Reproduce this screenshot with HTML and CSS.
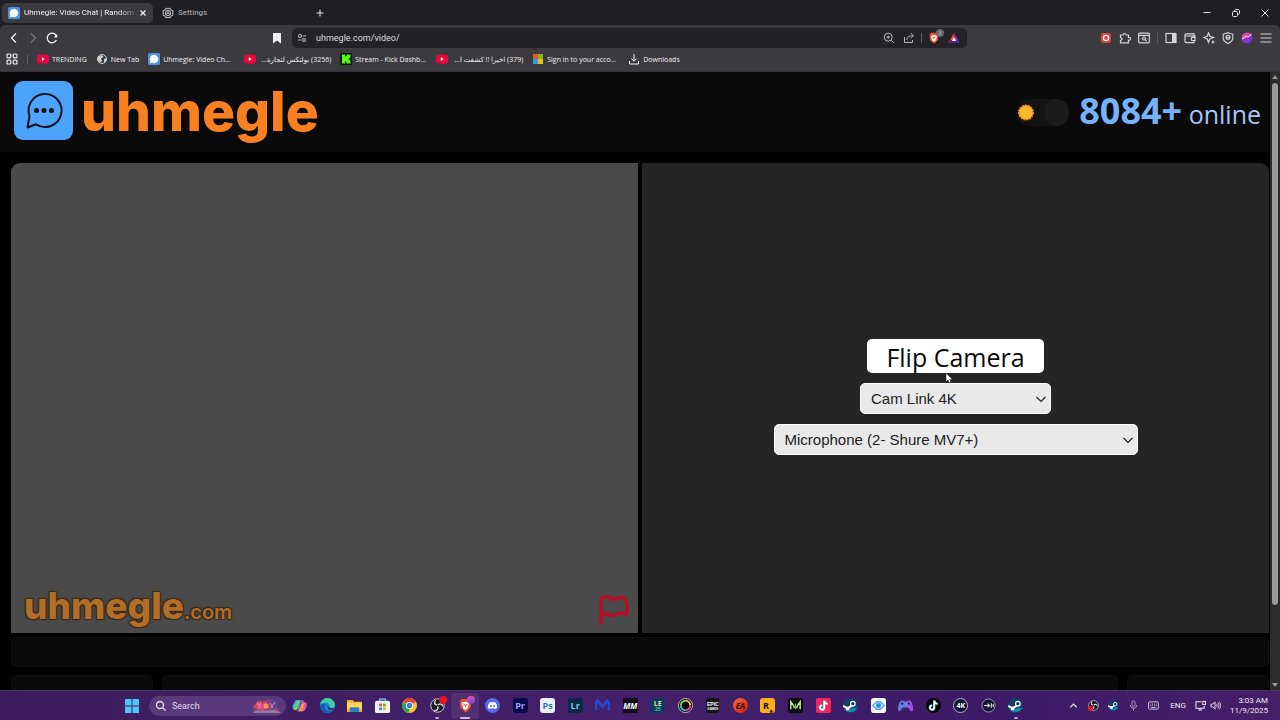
FILE: index.html
```html
<!DOCTYPE html>
<html lang="en">
<head>
    <meta charset="UTF-8">
    <meta name="viewport" content="width=device-width, initial-scale=1.0">
    <title>Uhmegle: Video Chat</title>
    <link rel="stylesheet" href="styles.css">
</head>
<body>
    <!-- shared icons -->
    <svg class="sprite" aria-hidden="true">
        <symbol id="bubble" viewBox="0 0 16 16"><rect width="16" height="16" rx="2" fill="#4a90e8"/><path d="M8 2.500a5.500 5.500 0 1 1-2.400 10.400L2.500 13.500l.5-3A5.500 5.500 0 0 1 8 2.500z" fill="#fff"/></symbol>
        <symbol id="youtube" viewBox="0 0 16 16"><rect y="2" width="16" height="12" rx="3.500" fill="#e8063c"/><path d="M6.500 5.500v5l4-2.500z" fill="#fff"/></symbol>
        <symbol id="steam" viewBox="0 0 16 16"><circle cx="8" cy="8" r="8" fill="#123f68"/><path d="M1 11a8 8 0 0 0 14 0l-4-1-5 3z" fill="#1b86b8"/><path d="M0 8.500l5 2.300 4-2.300 1.500-4" fill="none" stroke="#fff" stroke-width="2.200"/><circle cx="10.500" cy="6" r="2.500" fill="#123f68" stroke="#fff" stroke-width="1.300"/><circle cx="5" cy="11.200" r="2" fill="#fff"/></symbol>
        <symbol id="obs" viewBox="0 0 16 16"><circle cx="8" cy="8" r="7.200" fill="#1c1a1e" stroke="#d8d4dc"/><path d="M7.500 7.500c-3-.5-3.500-3-1.500-5M8.500 7.500c2-2 5-1 5 1.500M8 9c1.500 2.500-.5 5-3.500 4" fill="none" stroke="#d8d4dc" stroke-width="1.600"/></symbol>
        <symbol id="note" viewBox="0 0 16 16"><path d="M9 3v7.200A2.300 2.300 0 1 1 6.700 8M9 3c.3 2 1.500 3.200 3.500 3.300" fill="none" stroke="#25f4ee" stroke-width="1.800" transform="translate(-.6 -.4)"/><path d="M9 3v7.200A2.300 2.300 0 1 1 6.700 8M9 3c.3 2 1.500 3.200 3.500 3.300" fill="none" stroke="#fff" stroke-width="1.800"/></symbol>
        <symbol id="lion" viewBox="0 0 16 16"><path d="M4 1h8l2 2.500-.6 7L8 15.500 2.600 10.500 2 3.500z" fill="#f1502b"/><path d="M4.500 4.500L8 4l3.500.5.8 2-1.500 2 .2 2L8 13l-3-2.500.2-2-1.500-2z" fill="#fff"/><path d="M5.500 6.500l2 .7.5 2.500.5-2.500 2-.7" fill="none" stroke="#f1502b"/></symbol>
        <symbol id="chevron" viewBox="0 0 12 12"><path d="M1.500 4L6 8.500 10.500 4" fill="none" stroke="currentColor" stroke-width="1.200"/></symbol>
    </svg>

    <header class="browser">
        <div class="tab-strip">
            <div class="tab active">
                <svg class="icon"><use href="#bubble"/></svg>
                <span class="tab-title">Uhmegle: Video Chat | Random</span>
                <button class="tab-close" aria-label="Close tab"><svg viewBox="0 0 8 8"><path d="M1.500 1.500l5 5M6.500 1.500l-5 5" stroke="currentColor" stroke-width="1.200"/></svg></button>
            </div>
            <div class="tab">
                <svg class="icon" viewBox="0 0 16 16" fill="none" stroke="currentColor" stroke-width="1.400"><path d="M5.500 1.500L8 2.500l2.500-1L12 4l2.500 1-.3 3 .3 3-2.500 1-1.500 2.500-2.500-1-2.500 1L4 12l-2.500-1 .3-3-.3-3L4 4z"/><circle cx="8" cy="8" r="3.300"/><path d="M8 8V4.700M8 8l3 1.500M8 8l-3 1.500"/></svg>
                <span class="tab-title">Settings</span>
            </div>
            <button class="new-tab" aria-label="New tab"><svg viewBox="0 0 12 12"><path d="M6 2.500v7M2.500 6h7" stroke="currentColor"/></svg></button>
            <div class="window-buttons">
                <button aria-label="Minimize"><svg viewBox="0 0 12 12"><path d="M2.500 5.500h7" stroke="currentColor"/></svg></button>
                <button aria-label="Restore"><svg viewBox="0 0 12 12" fill="none" stroke="currentColor"><rect x="2.500" y="4.500" width="5" height="5" rx="1"/><path d="M4.500 4.500V4c0-.8.4-1.500 1.200-1.500H8c.8 0 1.500.5 1.500 1.300v2.500c0 .8-.7 1.200-1.500 1.200h-.5"/></svg></button>
                <button aria-label="Close"><svg viewBox="0 0 12 12"><path d="M2.500 2.500l7 7M9.500 2.500l-7 7" stroke="currentColor"/></svg></button>
            </div>
        </div>

        <div class="toolbar">
            <nav class="nav-buttons">
                <button aria-label="Back"><svg viewBox="0 0 12 12" fill="none" stroke="currentColor" stroke-width="1.300"><path d="M8 1.500L3.500 6 8 10.500"/></svg></button>
                <button class="dim" aria-label="Forward"><svg viewBox="0 0 12 12" fill="none" stroke="currentColor" stroke-width="1.300"><path d="M4 1.500L8.500 6 4 10.500"/></svg></button>
                <button aria-label="Reload"><svg viewBox="0 0 12 12" fill="none" stroke="currentColor" stroke-width="1.300"><path d="M10.400 8A4.800 4.800 0 1 1 10.600 4.500"/><path d="M11.200 2v3.600H7.600z" fill="currentColor" stroke="none"/></svg></button>
                <button class="bookmark-page" aria-label="Bookmark"><svg viewBox="0 0 12 12" fill="currentColor"><path d="M2 1h8v10.500L6 8.500l-4 3z"/></svg></button>
            </nav>
            <div class="address">
                <svg viewBox="0 0 12 12" fill="none" stroke="currentColor" stroke-width="1.100"><circle cx="4" cy="4" r="1.500"/><path d="M6.500 4H10M2 8h3.500"/><circle cx="8" cy="8" r="1.500"/></svg>
                <input type="text" aria-label="Address" value="uhmegle.com/video/">
                <button aria-label="Zoom"><svg viewBox="0 0 12 12" fill="none" stroke="currentColor"><circle cx="5.200" cy="5.200" r="4"/><path d="M8.200 8.200L11 11M5.200 3.500v3.400M3.500 5.200h3.400"/></svg></button>
                <button aria-label="Share"><svg viewBox="0 0 12 12" fill="none" stroke="currentColor"><path d="M1.500 5v5.500h8V8M3.800 8c.2-3 2-4.200 6-4.200M7.800 1.200l2.700 2.600-2.700 2.600"/></svg></button>
                <span class="divider"></span>
                <button class="shield" aria-label="Shields"><svg><use href="#lion"/></svg><span class="count">3</span></button>
                <button aria-label="Rewards"><svg viewBox="0 0 12 12"><path d="M6 1L0 11h6z" fill="#f0402c"/><path d="M6 1l6 10H6z" fill="#8a2a9c"/><path d="M0 11h12l-2.500-3h-7z" fill="#4a2290"/><path d="M6 5L3.800 9h4.400z" fill="#fff"/></svg></button>
            </div>
            <div class="extensions">
                <button aria-label="Recorder"><svg viewBox="0 0 12 12"><rect x="1" y="1" width="10" height="10" rx="2" fill="#dc3f3b"/><circle cx="6" cy="6" r="2.600" fill="none" stroke="#fff" stroke-width="1.400"/></svg></button>
                <button aria-label="Extensions"><svg viewBox="0 0 12 12" fill="none" stroke="currentColor" stroke-width="1.200"><path d="M1.500 3h2.700a1.500 1.500 0 1 1 3 0H9.500v2.400a1.500 1.500 0 1 1 0 2.800v2.600h-8V8.300c2 .2 2-3 0-2.700z"/></svg></button>
                <button aria-label="Search tabs"><svg viewBox="0 0 12 12" fill="none" stroke="currentColor" stroke-width="1.200"><rect x=".7" y="1.200" width="10.600" height="9.600" rx="1"/><path d="M1 3.400h10"/><circle cx="6" cy="6.500" r="1.500"/><path d="M7 7.500l1.600 1.600"/></svg></button>
                <span class="divider"></span>
                <button aria-label="Sidebar"><svg viewBox="0 0 12 12"><rect x="1" y="1.500" width="10" height="9" fill="none" stroke="currentColor" stroke-width="1.200"/><path d="M7 1.500h4v9H7z" fill="currentColor"/></svg></button>
                <button aria-label="Wallet"><svg viewBox="0 0 12 12" fill="none" stroke="currentColor" stroke-width="1.200"><path d="M10 4V1.800H2A1.200 1.200 0 0 0 1 3v6.500c0 .6.500 1.200 1.200 1.200H10V8.500M1.500 4H11v4.500H8a2 2 0 0 1 0-3.200h3"/></svg></button>
                <button aria-label="Leo AI"><svg viewBox="0 0 12 12" fill="none" stroke="currentColor" stroke-width="1.200"><path d="M5.500 1l1.400 3.300L10.500 5.500 6.900 7 5.500 10.300 4.200 7 .8 5.500l3.400-1.200z"/><path d="M10 8.500v3M8.500 10h3"/></svg></button>
                <button aria-label="VPN"><svg viewBox="0 0 12 12" fill="none" stroke="currentColor" stroke-width="1.100"><path d="M6 .7l4.800 1.600v3.500c0 2.600-2 4.500-4.800 5.600C3.200 10.300 1.200 8.400 1.200 5.800V2.300z"/><circle cx="6" cy="5.300" r="2"/><path d="M4 5.300h4"/></svg></button>
                <button aria-label="Profile"><svg viewBox="0 0 12 12"><circle cx="6" cy="6" r="5.500" fill="#7c35cc"/><path d="M.8 4.500A5.500 5.500 0 0 1 11 3.800L6 6 1 8z" fill="#d849a8"/><path d="M1 7l4-3 2 1 3.500-3" fill="none" stroke="#f8d8fa"/></svg></button>
                <button aria-label="Menu"><svg viewBox="0 0 12 12"><path d="M.5 2h11M.5 6h11M.5 10h11" stroke="currentColor" stroke-width="1.200"/></svg></button>
            </div>
        </div>

        <nav class="bookmarks">
            <button class="apps-grid" aria-label="Apps"><svg viewBox="0 0 12 12" fill="none" stroke="currentColor" stroke-width="1.200"><rect x="1" y="1" width="3.800" height="3.800" rx="1"/><rect x="7.200" y="1" width="3.800" height="3.800" rx="1"/><rect x="1" y="7.200" width="3.800" height="3.800" rx="1"/><rect x="7.200" y="7.200" width="3.800" height="3.800" rx="1"/></svg></button>
            <span class="divider"></span>
            <a href="#"><svg><use href="#youtube"/></svg><span>TRENDING</span></a>
            <a href="#"><svg viewBox="0 0 12 12"><circle cx="6" cy="6" r="4.500" fill="none" stroke="#d0d0d2"/><path d="M2 3.500l4-1.500 1.500 2L5 5.500 6 8l-2 1.500L1.500 7zM8 6l2.500-.8-.5 3.500-2 1z" fill="#d0d0d2"/></svg><span>New Tab</span></a>
            <a href="#"><svg><use href="#bubble"/></svg><span class="long">Uhmegle: Video Ch...</span></a>
            <a href="#"><svg><use href="#youtube"/></svg><span class="long" dir="rtl">(3256) بولتكس لتجارة...</span></a>
            <a href="#"><svg viewBox="0 0 12 12"><rect width="12" height="12" rx="1" fill="#071a05"/><path d="M2 1.500h3v2h1v-1h1v-1h3.500v3h-1v1h-1v1h1v1h1v3H7v-1H6v-1H5v2H2z" fill="#53fc18"/></svg><span class="long">Stream - Kick Dashb...</span></a>
            <a href="#"><svg><use href="#youtube"/></svg><span class="long" dir="rtl">(379) اخيرا !! كشفت ا...</span></a>
            <a href="#"><svg viewBox="0 0 12 12"><path d="M1 1h5v5H1z" fill="#e8562c"/><path d="M6 1h5v5H6z" fill="#86b71c"/><path d="M1 6h5v5H1z" fill="#20a2e4"/><path d="M6 6h5v5H6z" fill="#f6b91a"/></svg><span class="long">Sign in to your acco...</span></a>
            <a href="#"><svg viewBox="0 0 12 12" fill="none" stroke="currentColor"><path d="M6 1v7M3.300 5.500L6 8.200l2.700-2.700M1.500 8v3h9V8"/></svg><span>Downloads</span></a>
        </nav>
    </header>

    <div class="viewport">
        <div class="page">
            <header class="site-header">
                <a class="brand" href="#">
                    <svg class="brand-icon" viewBox="0 0 59 59"><path d="M13.500 46.500l2-11.500a16.500 16.500 0 1 1 6.500 8.300z" fill="none" stroke="#0a1018" stroke-width="2" stroke-linejoin="round"/><circle cx="22.500" cy="29.500" r="2.500" fill="#0a1018"/><circle cx="30" cy="29.500" r="2.500" fill="#0a1018"/><circle cx="37.500" cy="29.500" r="2.500" fill="#0a1018"/></svg>
                    <span class="brand-name">uhmegle</span>
                </a>
                <div class="status">
                    <label class="theme-toggle">
                        <input type="checkbox" checked aria-label="Dark theme">
                        <svg viewBox="0 0 18 18"><circle cx="9" cy="9" r="7.300" fill="#f39a1e" stroke="#f08a16" stroke-width="1.500" stroke-dasharray="2 1"/><circle cx="9" cy="9" r="6.300" fill="#fbb92e"/></svg>
                    </label>
                    <span class="online"><strong>8084+</strong> online</span>
                </div>
            </header>

            <main class="chat">
                <div class="videos">
                    <section class="video stranger">
                        <div class="watermark">uhmegle<span>.com</span></div>
                        <button class="report" aria-label="Report"><svg viewBox="0 0 32 30" fill="none" stroke="#b80f26" stroke-width="3.500" stroke-linecap="round" stroke-linejoin="round"><path d="M3 28V6c0-2.500 1-3.500 3-4 4-1 6 0 8 2 1.500 1 2.500 1 4 0 3-2.200 6-2.200 8.500-.5 2.500 3 3.500 9 2 15.500-4-1-7-1-10 .5-3 1.500-6 1-9 0-2.500-1-4.500-.5-6.500 .5"/></svg></button>
                    </section>
                    <section class="video self">
                        <div class="camera-controls">
                            <button class="flip">Flip Camera</button>
                            <div class="picker">
                                <select class="camera" aria-label="Camera"><option>Cam Link 4K</option></select>
                                <svg><use href="#chevron"/></svg>
                            </div>
                            <div class="picker">
                                <select class="microphone" aria-label="Microphone"><option>Microphone (2- Shure MV7+)</option></select>
                                <svg><use href="#chevron"/></svg>
                            </div>
                            <svg class="pointer" viewBox="0 0 8 12"><path d="M1 1v9l2-2 1.500 3 1.500-.7L4.700 7.500H7.500z" fill="#fff" stroke="#222" stroke-width=".6"/></svg>
                        </div>
                    </section>
                </div>
                <div class="messages"></div>
                <div class="composer">
                    <div class="box"></div>
                    <div class="box"></div>
                    <div class="box"></div>
                </div>
            </main>
        </div>
        <div class="scrollbar">
            <svg viewBox="0 0 6 6"><path d="M3 1l3 4H0z" fill="#9a9a9a"/></svg>
            <div class="thumb"></div>
            <svg viewBox="0 0 6 6"><path d="M3 5l3-4H0z" fill="#9a9a9a"/></svg>
        </div>
    </div>

    <footer class="taskbar">
        <button class="start" aria-label="Start"><svg viewBox="0 0 16 16"><path d="M1 1h6.500v6.500H1zM8.500 1H15v6.500H8.500zM1 8.500h6.500V15H1zM8.500 8.500H15V15H8.500z" fill="#4cc6f6"/></svg></button>
        <label class="search">
            <svg class="glass" viewBox="0 0 12 12" fill="none" stroke="currentColor" stroke-width="1.300"><circle cx="5" cy="5" r="3.500"/><path d="M7.600 7.600L10.500 10.500"/></svg>
            <input type="text" placeholder="Search" aria-label="Search">
            <svg class="art" viewBox="0 0 30 16"><path d="M2 14L1 8l5-6 6 1 5-2 9 2-1 6 3 5z" fill="#96436f"/><path d="M2 9l4-6 3 3 5-3 2 6-5 4z" fill="#d84a78"/><path d="M17 4l5-2 5 1-2 5-5 4z" fill="#4746a0"/><path d="M5 5l4 5M9 4L6 11M18 5l3 5M23 4l-4 6" fill="none" stroke="#f0708a" stroke-width="1.300"/><circle cx="14" cy="8" r="2.500" fill="#f3985c"/><path d="M1 15c4-4 8-2 12-2s8-3 16 2z" fill="#8d80a8"/></svg>
        </label>

        <div class="apps">
            <button aria-label="Copilot"><svg viewBox="0 0 16 16"><path d="M4 2h6l-3 10H3c-3 0-3-3-2-5z" fill="#30a7e8"/><path d="M10 2c3 0 3 3 5 3 2 0 0 9-3 9H6l4-9z" fill="#df5b9a"/><path d="M3 8l2-5h3L5 13H3c-2 0-2-2 0-5z" fill="#6fcf64"/><path d="M8 13l2-7h3l-2 8H6z" fill="#f49b45"/></svg></button>
            <button aria-label="Edge"><svg viewBox="0 0 16 16"><circle cx="8" cy="8" r="8" fill="#1684d8"/><path d="M0 8a8 8 0 0 1 16 0c0 3-4 4-6 2 1-3-1-5-4-5-3 0-5 1-6 3z" fill="#42cfa6"/><path d="M6 7c-3 3 0 8 6 7-6 4-12 0-12-6 1-2 4-3 6-1z" fill="#135dab"/><path d="M8 8c3 4 5 3 7 2-1 4-7 4-7-2z" fill="#381c68"/></svg></button>
            <button aria-label="Explorer"><svg viewBox="0 0 16 16"><path d="M0 2h6l2 2h8v11H0z" fill="#eeb22b"/><path d="M0 5h16v7H0z" fill="#fbd65a"/><path d="M3 10h10v5H3z" fill="#267bc8"/></svg></button>
            <button aria-label="Store"><svg viewBox="0 0 16 16"><path d="M5 4V1h6v3" fill="none" stroke="#55b9ee" stroke-width="1.500"/><rect y="3" width="16" height="13" rx="2" fill="#f2f2f5"/><path d="M4.500 6h3v3h-3z" fill="#e9552c"/><path d="M8.500 6h3v3h-3z" fill="#75ad25"/><path d="M4.500 10h3v3h-3z" fill="#2599db"/><path d="M8.500 10h3v3h-3z" fill="#efb21c"/></svg></button>
            <button aria-label="Chrome"><svg viewBox="0 0 16 16"><circle cx="8" cy="8" r="8" fill="#f8c629"/><path d="M8 8L1 4A8 8 0 0 1 15 4z" fill="#e44434"/><path d="M1 4l7 6-1 6A8 8 0 0 1 1 4z" fill="#31a354"/><circle cx="8" cy="8" r="3.800" fill="#fff"/><circle cx="8" cy="8" r="2.900" fill="#3d7fe8"/></svg></button>
            <button class="running" aria-label="OBS"><svg><use href="#obs"/></svg><i class="dot"></i></button>
            <button class="running current" aria-label="Brave"><svg><use href="#lion"/></svg><i class="dot profile"></i></button>
            <button aria-label="Discord"><svg viewBox="0 0 16 16"><circle cx="8" cy="8" r="8" fill="#5967e8"/><path d="M5 4.500h6c1.500 2 2 4 2 6-1 1-2 1.200-2.500 1.200L9.800 11H6.200l-.7.700c-1 0-2-.5-2.500-1.200 0-2 .5-4 2-6z" fill="#fff"/><circle cx="6.200" cy="8.500" r="1.100" fill="#5967e8"/><circle cx="9.800" cy="8.500" r="1.100" fill="#5967e8"/></svg></button>
            <button aria-label="Premiere Pro"><span class="tile premiere">Pr</span></button>
            <button aria-label="Photoshop"><span class="tile photoshop">Ps</span></button>
            <button aria-label="Lightroom"><span class="tile lightroom">Lr</span></button>
            <button aria-label="Malwarebytes"><svg viewBox="0 0 16 16"><path d="M1.500 13C0 9 1 5 3 3l5 6 5-6c2 2 3 6 1.500 10" fill="none" stroke="#2449cf" stroke-width="3"/></svg></button>
            <button aria-label="MM"><span class="tile mm">MM</span></button>
            <button aria-label="LE"><span class="tile le">LE<small>25</small></span></button>
            <button aria-label="Color"><svg viewBox="0 0 16 16"><circle cx="8" cy="8" r="7.500" fill="#0b0b0d" stroke="#eee" stroke-width=".8"/><g fill="none" stroke-width="2.200"><path d="M3 8a5 5 0 0 1 5-5" stroke="#6cd63a"/><path d="M8 3a5 5 0 0 1 5 5" stroke="#eac52c"/><path d="M13 8a5 5 0 0 1-5 5" stroke="#e04a9a"/><path d="M8 13a5 5 0 0 1-5-5" stroke="#38bde0"/></g></svg></button>
            <button aria-label="Epic Games"><span class="tile epic">EPIC<small>GAMES</small></span></button>
            <button aria-label="EA"><span class="tile ea">EA</span></button>
            <button aria-label="Rockstar"><span class="tile rockstar">R<small>★</small></span></button>
            <button aria-label="Medal"><svg viewBox="0 0 16 16"><rect width="16" height="16" rx="3" fill="#0b0d0b"/><path d="M3 12V4l3.500 5v2M13 12V4L9.500 9v2" fill="none" stroke="#c9ef9b" stroke-width="1.500"/><path d="M8 6v6" stroke="#67bb38" stroke-width="1.500"/></svg></button>
            <button aria-label="TikTok Studio"><svg viewBox="0 0 16 16"><rect width="16" height="16" rx="2" fill="#f5235c"/><use href="#note"/></svg></button>
            <button aria-label="Steam"><svg><use href="#steam"/></svg></button>
            <button aria-label="Camera tool"><svg viewBox="0 0 16 16"><rect width="16" height="16" rx="3" fill="#f4f9ff"/><path d="M2 8l4-4h4l4 4-4 4H6z" fill="none" stroke="#59a8ed" stroke-width="1.500"/><circle cx="8" cy="8" r="3" fill="#4da4ea"/><circle cx="8" cy="8" r="1.200" fill="#176fb5"/></svg></button>
            <button aria-label="Gamepad"><svg viewBox="0 0 16 16"><path d="M3 3h3l2 1 2-1h3c2 2 3 6 3 10l-2 1-3-4H5l-3 4-2-1c0-4 1-8 3-10z" fill="#667ee8"/><path d="M10 3h3c2 2 3 6 3 10l-2 1-3-4z" fill="#b746e8"/><path d="M3 6h3M4.500 4.500v3" stroke="#261b62"/><circle cx="11.500" cy="6" r="1.200" fill="#261b62"/></svg></button>
            <button aria-label="TikTok"><svg viewBox="0 0 16 16"><circle cx="8" cy="8" r="8" fill="#050507"/><use href="#note"/></svg></button>
            <button aria-label="4K Capture"><span class="tile ring">4K</span></button>
            <button aria-label="Stream Deck"><svg viewBox="0 0 16 16"><circle cx="8" cy="8" r="7" fill="#141431" stroke="#b7b4cf" stroke-width=".8"/><path d="M3 8h6M7 6L9 8 7 10M11 5.500v5M13 6.500v3" fill="none" stroke="#dfddeb" stroke-width="1.200"/></svg></button>
            <button class="running" aria-label="Steam window"><svg><use href="#steam"/></svg></button>
        </div>

        <div class="tray">
            <svg viewBox="0 0 12 12" fill="none" stroke="currentColor" stroke-width="1.300"><path d="M2.500 8L6 4.500 9.500 8"/></svg>
            <span class="badge-icon"><svg><use href="#obs"/></svg><i class="dot low"></i></span>
            <svg><use href="#steam"/></svg>
            <svg viewBox="0 0 12 12" fill="none" stroke="#b99bd0"><rect x="4.300" y="1" width="3.400" height="6" rx="1.700"/><path d="M2.500 5.500a3.500 3.500 0 0 0 7 0M6 9v2.500"/></svg>
            <svg viewBox="0 0 12 12" fill="none" stroke="#d8cbe4"><rect x=".7" y="2" width="10.600" height="8" rx="1"/><path d="M2.500 4.500h7M2.500 6.300h7" stroke-dasharray="1 1"/><path d="M3.500 8.200h5"/></svg>
            <span class="lang">ENG</span>
            <div class="system">
                <svg viewBox="0 0 12 12" fill="none" stroke="currentColor" stroke-width="1.100"><path d="M7 2H1v7h9V6.500M3.500 11h4M5.500 9v2"/><rect x="8.500" y="1.500" width="3" height="3.500"/></svg>
                <svg viewBox="0 0 12 12" fill="none" stroke="currentColor"><path d="M1 4.500h2L5.500 2v8L3 7.500H1zM7 4.500c1 1 1 2 0 3M8.500 3c1.800 2 1.800 4 0 6M10 1.800c2.200 2.700 2.200 5.700 0 8.400"/></svg>
            </div>
            <div class="clock"><time>3:03 AM</time><time>11/9/2025</time></div>
        </div>
    </footer>
</body>
</html>
```
FILE: styles.css
```css
* {
    margin: 0;
    padding: 0;
    box-sizing: border-box;
}

body {
    height: 100vh;
    display: flex;
    flex-direction: column;
    overflow: hidden;
    background: #000;
    color: #e4e4e6;
    font-family: Roboto, 'DejaVu Sans', sans-serif;
    font-size: 8px;
}

button {
    display: flex;
    align-items: center;
    justify-content: center;
    background: none;
    border: none;
    color: inherit;
    font-family: inherit;
}

input,
select {
    border: none;
    outline: none;
    background: none;
    color: inherit;
    font-family: inherit;
}

a {
    color: inherit;
    text-decoration: none;
}

svg {
    display: block;
    flex: none;
    width: 12px;
    height: 12px;
}

.sprite {
    position: absolute;
    width: 0;
    height: 0;
}

.divider {
    width: 1px;
    height: 10px;
    background: #5a5a5f;
}

/* browser */
.browser {
    flex: none;
    background: #1f1e23;
}

.tab-strip {
    height: 25px;
    display: flex;
    align-items: center;
    padding-left: 2px;
}

.tab {
    width: 151px;
    height: 20px;
    display: flex;
    align-items: center;
    gap: 4px;
    padding: 0 6px;
    border-radius: 5px;
    color: #b8b8bc;
}

.tab + .tab {
    padding-left: 9px;
}

.tab.active {
    background: #3b3a3e;
    color: #f2f2f2;
}

.tab-title {
    flex: 1;
    white-space: nowrap;
}

.tab.active .tab-title {
    mask-image: linear-gradient(90deg, #000 85%, transparent 105%);
}

.tab-close svg {
    width: 8px;
    height: 8px;
}

.new-tab {
    margin-left: 10px;
}

.window-buttons {
    display: flex;
    gap: 17px;
    margin-left: auto;
    padding-right: 9px;
}

.toolbar {
    height: 25px;
    display: grid;
    grid-template-columns: 292fr 675fr 313fr;
    align-items: center;
    background: #3b3a3e;
    border-radius: 5px 5px 0 0;
}

.nav-buttons {
    display: flex;
    gap: 7px;
    padding: 0 9px 0 8px;
    color: #f0f0f2;
}

.nav-buttons .dim {
    color: #77767b;
}

.bookmark-page {
    margin-left: auto;
}

.address {
    height: 20px;
    display: flex;
    align-items: center;
    gap: 8px;
    min-width: 0;
    padding: 0 7px 0 4px;
    border-radius: 5px;
    background: #232227;
    color: #b8b8bc;
}

.address input {
    flex: 1;
    min-width: 0;
    color: #dcdcde;
    font-size: 9px;
}

.address .divider {
    margin: 0 -2px;
}

.shield {
    position: relative;
}

.shield .count {
    position: absolute;
    top: -3px;
    right: -4px;
    width: 8px;
    height: 8px;
    border-radius: 50%;
    background: #68676f;
    font-size: 6px;
    line-height: 8px;
}

.extensions {
    display: flex;
    align-items: center;
    justify-content: flex-end;
    gap: 7px;
    padding-right: 8px;
    color: #d6d6d8;
}

.bookmarks {
    height: 22px;
    display: flex;
    align-items: center;
    gap: 9px;
    padding: 0 6px 3px;
    background: #3b3a3e;
    border-bottom: 1px solid #343337;
    color: #f2f2f2;
    font-family: 'Open Sans', 'DejaVu Sans', sans-serif;
    font-size: 7px;
}

.bookmarks a {
    display: flex;
    align-items: center;
    gap: 3px;
    white-space: nowrap;
}

.bookmarks .long {
    min-width: 72px;
}

/* page */
.viewport {
    flex: 1;
    min-height: 0;
    display: flex;
}

.page {
    flex: 1;
    min-width: 0;
    display: flex;
    flex-direction: column;
}

.site-header {
    height: 80px;
    flex: none;
    display: flex;
    align-items: center;
    justify-content: space-between;
    padding: 0 9px 3px 14px;
    background: #0a0a0a;
}

.brand {
    display: flex;
    align-items: center;
    gap: 8px;
}

.brand-icon {
    width: 59px;
    height: 59px;
    border-radius: 9px;
    background: #4ba3fc;
}

.brand-name,
.watermark {
    font-family: Inter, sans-serif;
    font-weight: 800;
}

.brand-name {
    color: #f98020;
    font-size: 55px;
    line-height: 60px;
}

.status {
    display: flex;
    align-items: center;
    gap: 10px;
    padding-top: 3px;
}

.theme-toggle {
    position: relative;
    width: 52px;
    height: 27px;
    border-radius: 14px;
    background: #131313;
}

.theme-toggle input {
    position: absolute;
    right: 0;
    width: 25px;
    height: 27px;
    appearance: none;
    border-radius: 14px;
    background: #1b1b1b;
}

.theme-toggle svg {
    width: 18px;
    height: 27px;
}

.online {
    color: #a9c6f8;
    font-family: 'Open Sans', sans-serif;
    font-size: 25px;
    line-height: 48px;
}

.online strong {
    color: #74b3fb;
    font-size: 36px;
}

.chat {
    flex: 1;
    min-height: 0;
    display: flex;
    flex-direction: column;
    padding: 11px 1px 0 11px;
}

.videos {
    flex: 1;
    display: grid;
    grid-template-columns: 1fr 1fr;
    gap: 4px;
}

.video {
    display: flex;
}

.stranger {
    align-items: flex-end;
    justify-content: space-between;
    padding: 0 8px 0 13px;
    border-radius: 9px 0 0 0;
    background: #4a4a4a;
}

.watermark {
    color: #b06e28;
    font-size: 37px;
    line-height: 42px;
    text-shadow: 1px 1px 1px #3a2a1a, -1px -1px 1px #3a2a1a, 1px -1px 1px #3a2a1a, -1px 1px 1px #3a2a1a;
}

.watermark span {
    font-size: 20px;
    font-weight: 600;
}

.report svg {
    width: 32px;
    height: 30px;
    margin-bottom: 8px;
}

.self {
    align-items: center;
    justify-content: center;
    border-radius: 0 9px 0 0;
    background: #252525;
}

.camera-controls {
    position: relative;
    display: flex;
    flex-direction: column;
    align-items: center;
    gap: 10px;
    padding-bottom: 2px;
}

.flip {
    height: 34px;
    padding: 2px 19px 0;
    border-radius: 5px;
    background: #fff;
    color: #0a0a0a;
    font-family: 'Open Sans', sans-serif;
    font-size: 25px;
    line-height: 32px;
}

.picker {
    position: relative;
}

.picker select {
    height: 31px;
    display: block;
    padding: 0 10px;
    appearance: none;
    border: 1px solid #fff;
    border-radius: 5px;
    background: #e9e9e9;
    color: #222;
    font-family: 'Liberation Sans', sans-serif;
    font-size: 15px;
}

.picker svg {
    position: absolute;
    top: 10px;
    right: 4px;
    color: #222;
    pointer-events: none;
}

.camera {
    width: 191px;
}

.microphone {
    width: 364px;
}

.pointer {
    position: absolute;
    top: 33px;
    left: 47%;
    width: 8px;
}

.messages {
    height: 30px;
    margin: 4px 0 8px;
    border: 1px solid #0e0e0e;
    border-radius: 5px;
    background: #0a0a0a;
}

.composer {
    height: 15px;
    display: grid;
    grid-template-columns: 142fr 957fr 142fr;
    gap: 9px;
}

.box {
    border: 1px solid #0e0e0e;
    border-bottom: none;
    border-radius: 5px 5px 0 0;
    background: #0a0a0a;
}

.scrollbar {
    width: 10px;
    display: flex;
    flex-direction: column;
    align-items: center;
    padding: 2px 0;
    background: #2b2b2b;
}

.scrollbar svg {
    width: 6px;
    height: 6px;
}

.thumb {
    width: 6px;
    height: 85%;
    margin: 3px 0 auto;
    border-radius: 3px;
    background: #9b9b9b;
}

/* taskbar */
.taskbar {
    flex: none;
    height: 30px;
    display: flex;
    align-items: center;
    padding: 0 12px 0 124px;
    border-top: 1px solid #4d3560;
    background: linear-gradient(90deg, #3c1c5e, #44206a 50%, #3c1a66 75%, #451f68);
    color: #eee6f4;
}

.start svg {
    width: 16px;
    height: 16px;
}

.search {
    width: 137px;
    height: 20px;
    flex: none;
    display: flex;
    align-items: center;
    gap: 5px;
    margin-left: 9px;
    padding: 0 4px 0 6px;
    border-radius: 10px;
    background: #59387b;
}

.search input {
    flex: 1;
    min-width: 0;
    font-size: 9px;
}

.search input::placeholder {
    color: #e2d8ec;
}

.search .art {
    width: 30px;
    height: 16px;
}

.apps {
    width: 65%;
    flex: none;
    display: grid;
    grid-template-columns: repeat(27, 1fr);
}

.apps button {
    position: relative;
    height: 26px;
    border-radius: 3px;
    font-family: 'Open Sans', sans-serif;
}

.apps svg {
    width: 15px;
    height: 15px;
}

.apps .current {
    background: #52306f;
}

.running::after {
    content: '';
    position: absolute;
    bottom: 0;
    width: 4px;
    height: 2px;
    border-radius: 1px;
    background: #b9a5cc;
}

.current::after {
    width: 10px;
    background: #d5b8e4;
}

.dot {
    position: absolute;
    top: 3px;
    right: 4px;
    width: 8px;
    height: 8px;
    border-radius: 50%;
    background: #e81224;
}

.dot.profile {
    background: linear-gradient(160deg, #e35ac0, #7c35cc);
}

.dot.low {
    top: 6px;
    right: 6px;
    width: 5px;
    height: 5px;
}

.tile {
    width: 15px;
    height: 15px;
    display: flex;
    align-items: center;
    justify-content: center;
    border-radius: 3px;
    font-size: 9px;
    font-weight: 700;
    line-height: 6px;
}

.tile small {
    font-size: 3px;
    line-height: 4px;
}

.premiere {
    background: #07064f;
    color: #b0a4fa;
}

.photoshop {
    background: #e8f1fa;
    color: #2d7bb4;
}

.lightroom {
    background: #062a48;
    color: #7cc8ee;
}

.mm {
    border-radius: 0;
    background: #120a1a;
    color: #fff;
    font-size: 8px;
    font-style: italic;
}

.tile.le {
    flex-direction: column;
    background: #103663;
    color: #d5e78a;
    font-size: 7px;
}

.tile.le small {
    color: #4fd07c;
    font-size: 5px;
}

.tile.epic {
    flex-direction: column;
    width: 13px;
    background: #141416;
    color: #fff;
    font-family: 'Liberation Sans', sans-serif;
    font-size: 5px;
}

.ea {
    border-radius: 50%;
    background: linear-gradient(135deg, #ff6a2a, #c3211c);
    color: #2c0808;
    font-size: 8px;
    font-style: italic;
}

.rockstar {
    background: #fcb016;
    color: #17120a;
}

.rockstar small {
    font-size: 5px;
    align-self: flex-end;
}

.ring {
    border: 1px solid #b7b4cf;
    border-radius: 50%;
    background: #141431;
    color: #fff;
    font-size: 7px;
}

.tray {
    flex: 1;
    display: flex;
    align-items: center;
    justify-content: flex-end;
    gap: 9px;
}

.tray svg {
    width: 11px;
    height: 11px;
}

.badge-icon {
    position: relative;
}

.lang {
    margin-left: 2px;
}

.system {
    display: flex;
    gap: 4px;
}

.clock {
    display: flex;
    flex-direction: column;
    align-items: flex-end;
    line-height: 10px;
}
```
